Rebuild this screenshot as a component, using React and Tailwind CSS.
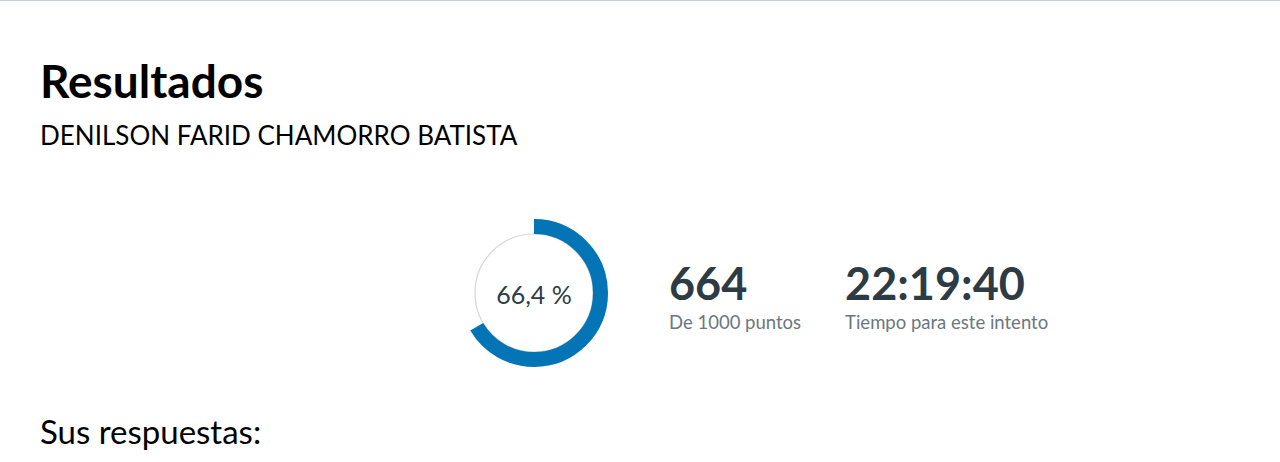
import React from 'react';

function Donut({ pct }) {
  const r = 66.5;
  const c = 2 * Math.PI * r;
  return (
    <div className="relative w-[148px] h-[148px] flex items-center justify-center shrink-0">
      <svg width="148" height="148" viewBox="0 0 148 148" className="absolute inset-0">
        <circle cx="74" cy="74" r="59" fill="none" stroke="#d4d7da" strokeWidth="1.2" />
        <circle
          cx="74"
          cy="74"
          r={r}
          fill="none"
          stroke="#0374b5"
          strokeWidth="15"
          strokeDasharray={`${(c * pct) / 100} ${c}`}
          transform="rotate(-90 74 74)"
        />
      </svg>
      <span className="relative text-[25px] leading-[30px] text-[#2d3b45] mt-[2px]">
        {pct.toString().replace('.', ',')} %
      </span>
    </div>
  );
}

function Stat({ value, label }) {
  return (
    <div className="flex flex-col">
      <span className="text-[45px] leading-[50px] font-bold text-[#2d3b45]">{value}</span>
      <span className="text-[18.5px] leading-[22px] text-[#6b7780] mt-[2.6px]">{label}</span>
    </div>
  );
}

export default function App() {
  return (
    <div
      className="w-[1280px] h-[462px] bg-white border-t border-[#c7cdd1] overflow-hidden"
      style={{ fontFamily: 'Lato, "Open Sans", sans-serif' }}
    >
      <div className="pl-[40px] pt-[52px]">
        <h1 className="text-[46px] leading-[56px] font-bold text-black">Resultados</h1>
        <div className="text-[26px] leading-[32px] text-black mt-[10px]">DENILSON FARID CHAMORRO BATISTA</div>
      </div>
      <div className="flex items-start pl-[460px] mt-[68px]">
        <Donut pct={66.4} />
        <div className="ml-[61px] mt-[39px] flex gap-[44px]">
          <Stat value="664" label="De 1000 puntos" />
          <Stat value="22:19:40" label="Tiempo para este intento" />
        </div>
      </div>
      <div className="pl-[40px] mt-[44px] text-[33px] leading-[40px] text-black">Sus respuestas:</div>
    </div>
  );
}
